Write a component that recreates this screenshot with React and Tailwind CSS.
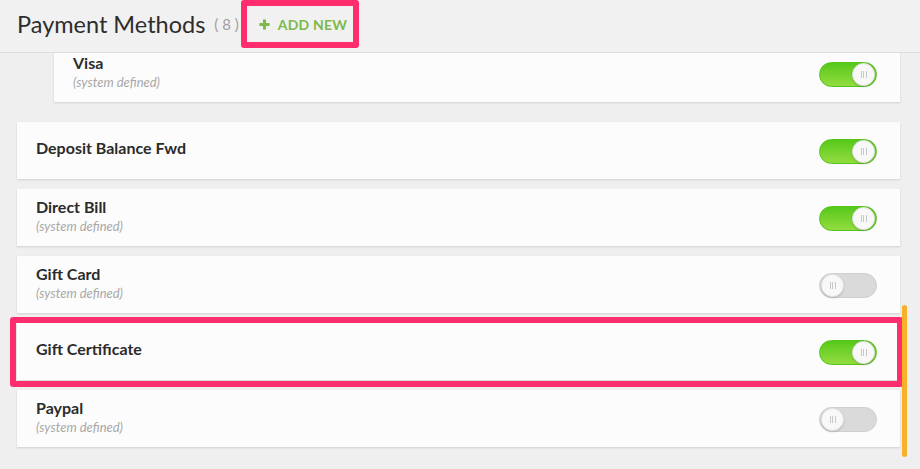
import React from "react";

const methods = [
  { name: "Deposit Balance Fwd", system: false, on: true },
  { name: "Direct Bill", system: true, on: true },
  { name: "Gift Card", system: true, on: false },
  { name: "Gift Certificate", system: false, on: true, marked: true },
  { name: "Paypal", system: true, on: false },
];

function Toggle({ on }) {
  return (
    <div
      className={
        "relative w-[58px] h-[25px] rounded-full border flex items-center px-[1px] mt-[2px] " +
        (on
          ? "justify-end border-[#58c21e] bg-gradient-to-b from-[#55c918] to-[#92dc3e]"
          : "justify-start border-[#cfcfcf] bg-[#dadada]")
      }
    >
      <div className="w-[23px] h-[23px] rounded-full bg-[#f8f8f8] border border-[#e2e2e2] shadow-[0_1px_2px_rgba(0,0,0,0.15)] flex items-center justify-center gap-[1.5px]">
        <span className="w-px h-[7px] bg-[#c8c8c8]" />
        <span className="w-px h-[7px] bg-[#c8c8c8]" />
        <span className="w-px h-[7px] bg-[#c8c8c8]" />
      </div>
    </div>
  );
}

function Label({ name, system }) {
  return (
    <div className="flex flex-col -mt-[5px]">
      <span className="text-[16px] leading-[20px] font-bold text-[#2b2b2b]">{name}</span>
      {system && (
        <span className="text-[13px] leading-[16px] italic text-[#a8a8a8] mt-[1px]">(system defined)</span>
      )}
    </div>
  );
}

function Row({ item }) {
  return (
    <div className="relative">
      <div className="h-[57px] bg-[#fcfcfc] shadow-[0_1px_2px_rgba(0,0,0,0.13)] flex items-center justify-between pl-[19px] pr-[23px]">
        <Label name={item.name} system={item.system} />
        <Toggle on={item.on} />
      </div>
      {item.marked && (
        <div className="absolute -left-[7px] -right-[3px] -top-[6px] -bottom-[7px] border-[6px] border-[#ff2d6b] rounded-[3px]" />
      )}
    </div>
  );
}

export default function App() {
  return (
    <div className="relative w-[920px] h-[469px] overflow-hidden bg-[#efefef] font-['Lato',sans-serif]">
      {/* header */}
      <div className="h-[53px] border-b border-[#dedede] bg-[#f1f1f1] flex items-center pl-[17px]">
        <h1 className="text-[23.5px] font-normal text-[#2d2d2d] -mt-[3px]">Payment Methods</h1>
        <span className="ml-[9px] text-[15px] text-[#a0a0a0] -mt-[3px] whitespace-pre">( 8 )</span>
        <div className="ml-[2px] -mt-[4px] w-[118px] h-[48px] border-[6px] border-[#ff2d6b] rounded-[3px] flex items-center pl-[12px]">
          <svg width="11" height="11" viewBox="0 0 11 11" className="mr-[8px]">
            <path d="M5.5 0.5v10M0.5 5.5h10" stroke="#7bb94b" strokeWidth="3" />
          </svg>
          <span className="text-[#7bb94b] font-bold text-[14px] tracking-[0.2px]">ADD NEW</span>
        </div>
      </div>

      <div className="pl-[17px] pr-[20px]">
        {/* partially scrolled card */}
        <div className="ml-[37px] h-[49px] overflow-hidden bg-[#fcfcfc] shadow-[0_1px_2px_rgba(0,0,0,0.13)]">
          <div className="h-[57px] -mt-[8px] flex items-center justify-between pl-[19px] pr-[23px]">
            <Label name="Visa" system={true} />
            <Toggle on={true} />
          </div>
        </div>

        <div className="mt-[20px] flex flex-col gap-[10px]">
          {methods.map((m) => (
            <Row key={m.name} item={m} />
          ))}
        </div>
      </div>

      {/* scrollbar */}
      <div className="absolute left-[902px] top-[305px] w-[5px] h-[152px] rounded-full bg-[#f8b02a]" />
    </div>
  );
}
